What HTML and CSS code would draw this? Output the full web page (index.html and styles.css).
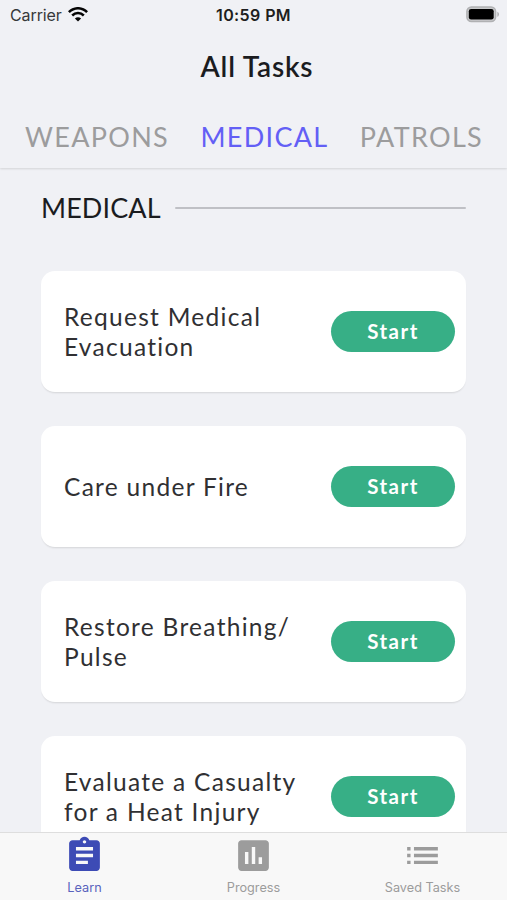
FILE: index.html
```html
<!DOCTYPE html>
<html lang="en">
<head>
<meta charset="utf-8">
<title>All Tasks</title>
<link rel="stylesheet" href="styles.css">
</head>
<body>
<div class="screen">
  <header class="header">
    <div class="status">
      <div class="carrier"><span>Carrier</span>
        <svg class="wifi" width="20" height="15" viewBox="0 0 20 15" fill="none" stroke="#050505" stroke-width="2.5"><path d="M.9 5.2C6-.1 14-.1 19.1 5.2M4.2 8.5c3.3-3.3 8.300-3.300 11.600 0"/><path d="M10 14.500 6.900 11.400c1.800-1.600 4.400-1.600 6.200 0z" fill="#050505" stroke="none"/></svg>
      </div>
      <div class="clock">10:59 PM</div>
      <div class="power">
        <svg width="34" height="17" viewBox="0 0 34 17"><rect x=".9" y=".9" width="28.700" height="14.700" rx="4.500" fill="#c8c9cb" stroke="#b0b1b3" stroke-width="1.500"/><rect x="2.800" y="2.900" width="24.900" height="10.700" rx="2.300" fill="#000"/><path d="M31.300 5.700c2.300.8 2.300 4.300 0 5.100z" fill="#b0b1b3"/></svg>
      </div>
    </div>
    <h1 class="title">All Tasks</h1>
    <nav class="tabs">
      <span class="tab">WEAPONS</span>
      <span class="tab active">MEDICAL</span>
      <span class="tab">PATROLS</span>
    </nav>
  </header>
  <main class="content">
    <div class="section"><h2>MEDICAL</h2><div class="rule"></div></div>
    <div class="cards">
      <article class="card"><p>Request Medical<br>Evacuation</p><button>Start</button></article>
      <article class="card"><p>Care under Fire</p><button>Start</button></article>
      <article class="card"><p>Restore Breathing/<br>Pulse</p><button>Start</button></article>
      <article class="card"><p>Evaluate a Casualty<br>for a Heat Injury</p><button>Start</button></article>
    </div>
  </main>
  <footer class="bar">
    <div class="item selected">
      <svg viewBox="0 0 24 24"><path d="M19 3h-4.180C14.400 1.840 13.300 1 12 1s-2.400.84-2.820 2H5c-1.100 0-2 .9-2 2v14c0 1.100.9 2 2 2h14c1.100 0 2-.9 2-2V5c0-1.100-.9-2-2-2zm-7 0c.55 0 1 .45 1 1s-.45 1-1 1-1-.45-1-1 .45-1 1-1zm2 14H7v-2h7v2zm3-4H7v-2h10v2zm0-4H7V7h10v2z"/></svg>
      <span>Learn</span>
    </div>
    <div class="item">
      <svg viewBox="0 0 24 24"><path d="M19 3H5c-1.100 0-2 .9-2 2v14c0 1.100.9 2 2 2h14c1.100 0 2-.9 2-2V5c0-1.100-.9-2-2-2zM9 17H7v-7h2v7zm4 0h-2V7h2v10zm4 0h-2v-4h2v4z"/></svg>
      <span>Progress</span>
    </div>
    <div class="item">
      <svg viewBox="0 0 24 24"><path d="M3 13h2v-2H3v2zm0 4h2v-2H3v2zm0-8h2V7H3v2zm4 4h14v-2H7v2zm0 4h14v-2H7v2zM7 7v2h14V7H7z"/></svg>
      <span>Saved Tasks</span>
    </div>
  </footer>
</div>
</body>
</html>
```
FILE: styles.css
```css
* { box-sizing: border-box; }
body { margin: 0; font-family: Lato, sans-serif; background: #f0f1f5; }
h1, h2, p { margin: 0; }
.screen { height: 900px; display: flex; flex-direction: column; overflow: hidden; }
.header { flex: 0 0 168px; display: flex; flex-direction: column; background: #f0f1f5; box-shadow: 0 1px 2px rgba(0, 0, 0, .12); }
.status { height: 30px; display: grid; grid-template-columns: 1fr auto 1fr; align-items: center; padding: 0 7px 0 10px; font: 16px/30px Inter, sans-serif; color: #37383a; }
.carrier { display: flex; align-items: center; gap: 6px; }
.carrier span { letter-spacing: -.1px; }
.wifi { display: block; margin-top: -1px; }
.clock { font-weight: 600; letter-spacing: .4px; color: #1d1e20; margin-left: -3px; }
.power { display: flex; justify-content: flex-end; margin-top: -2px; }
.title { height: 73px; text-align: center; font-size: 28px; line-height: 73px; font-weight: 600; letter-spacing: .8px; color: #1b1c1f; padding-left: 7px; }
.tabs { height: 65px; display: flex; justify-content: space-between; padding: 0 24px 0 25px; font-size: 27px; line-height: 67px; letter-spacing: 1.300px; color: #9c9c9d; }
.active { color: #635ff5; }
.content { flex: 1; min-height: 0; overflow: hidden; padding: 20px 41px 0; }
.section { height: 40px; display: flex; align-items: center; gap: 14px; }
.section h2 { font-size: 27px; font-weight: 400; line-height: 40px; letter-spacing: .1px; color: #1b1c1f; }
.rule { flex: 1; height: 2px; margin-top: -1px; border-radius: 1px; background: #bfc0c5; }
.cards { display: grid; gap: 34px; padding-top: 43px; }
.card { height: 121px; display: flex; align-items: center; justify-content: space-between; padding: 0 11px 0 23px; border-radius: 14px; background: #fff; box-shadow: 0 2px 2px -1px rgba(0, 0, 0, .12); }
.card p { font-size: 24.500px; line-height: 29.500px; letter-spacing: 1.280px; color: #303033; white-space: nowrap; }
.card button { width: 124px; height: 41px; border: 0; border-radius: 21px; padding: 0 0 1px; background: #37af86; color: #fff; font: 700 20.500px Lato, sans-serif; letter-spacing: 1.500px; }
.bar { flex: 0 0 68px; display: grid; grid-template-columns: repeat(3, 1fr); background: #f8f8f8; border-top: 1px solid #dedede; }
.item { display: flex; flex-direction: column; align-items: center; padding-top: 2px; color: #9c9c9c; }
.item svg { width: 41px; height: 41px; fill: currentColor; }
.item span { font: 12.700px/16px Inter, sans-serif; margin-top: 4px; }
.selected { color: #3d4bb5; }
.selected span { color: #5963bd; }
```
